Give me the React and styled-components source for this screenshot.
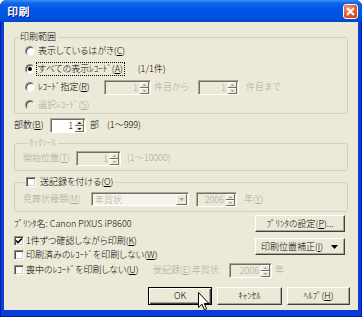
import React from 'react'
import styled, { createGlobalStyle } from 'styled-components'

const FACE = '#ECE9D8'
const GRAY = '#ACA899'

const GlobalStyle = createGlobalStyle`
  html, body { margin: 0; padding: 0; background: #fff; }
  body { font-family: "Noto Sans CJK JP", "Noto Sans", sans-serif; }
`

const Window = styled.div`
  position: relative;
  width: 362px;
  height: 317px;
  box-sizing: border-box;
  display: flex;
  flex-direction: column;
  background: #0A3ED6;
  border-radius: 7px 7px 0 0;
  overflow: hidden;
  box-shadow: inset 1px 0 #0019A8, inset -1px 0 #0019A8, inset 0 -1px #0019A8;
`

const TitleBar = styled.div`
  height: 22px;
  flex: none;
  display: flex;
  align-items: center;
  justify-content: space-between;
  padding: 0 4px 0 7px;
  background: linear-gradient(to bottom, #3D91F6 0, #1266EE 3px, #0058E6 8px, #0054E3 14px, #0050DC 19px, #0045C8 22px);
`

const Title = styled.span`
  color: #fff;
  font-weight: bold;
  font-size: 11px;
  letter-spacing: 0.5px;
  text-shadow: 1px 1px #0A1B8A;
`

const CloseButton = styled.div`
  width: 15px;
  height: 15px;
  box-sizing: border-box;
  border: 1px solid #fff;
  border-radius: 3px;
  background: radial-gradient(circle at 35% 30%, #F39C7C 0, #E0582F 55%, #C5380F 100%);
  display: flex;
  align-items: center;
  justify-content: center;
`

const Body = styled.div`
  flex: 1;
  margin: 0 4px 7px;
  background: ${FACE};
  padding: 9px 10px 0;
  display: flex;
  flex-direction: column;
  font-size: 9px;
  font-weight: 300;
  line-height: 12px;
  color: #000;
  font-feature-settings: "palt";
  white-space: nowrap;
`

const Group = styled.fieldset`
  margin: ${p => p.$mt || 0}px 0 0;
  padding: 0 0 ${p => p.$pb || 0}px ${p => p.$pl || 0}px;
  border: 1px solid #D0D0BF;
  border-radius: 3px;
  min-width: 0;
  display: flex;
  flex-direction: column;
  gap: ${p => p.$gap || 0}px;
`

const Legend = styled.legend`
  margin-left: ${p => p.$ml}px;
  padding: 0 2px 0 ${p => (p.$pad ?? 1)}px;
  height: 12px;
  line-height: 12px;
  display: flex;
  align-items: center;
  gap: 4px;
  color: ${p => (p.$disabled ? GRAY : '#000')};
  background: ${FACE};
`

const Row = styled.div`
  height: ${p => p.$h || 16}px;
  margin-top: ${p => p.$mt || 0}px;
  display: flex;
  align-items: center;
  flex: none;
`

const Text = styled.span`
  display: inline-block;
  color: ${p => (p.$disabled ? GRAY : '#000')};
  width: ${p => (p.$w ? `${p.$w}px` : 'auto')};
  margin-left: ${p => p.$ml || 0}px;
  flex: none;
`

const Key = styled.span`
  text-decoration: underline;
  text-underline-offset: 1px;
`

const Focus = styled.span`
  display: inline-block;
  outline: 1px dotted #000;
  outline-offset: 0;
  padding: 0 1px;
  margin-left: -1px;
  line-height: 12px;
`

const RadioDot = styled.span`
  width: 10px;
  height: 10px;
  box-sizing: border-box;
  border-radius: 50%;
  border: 1px solid;
  border-color: #8E8D86 #F4F3EE #F4F3EE #8E8D86;
  box-shadow: inset 1px 1px #4F4E47;
  background: ${p => (p.$disabled ? FACE : '#fff')};
  display: inline-flex;
  align-items: center;
  justify-content: center;
  margin: 0 3px 0 10px;
  flex: none;
  &::after {
    content: '';
    width: 4px;
    height: 4px;
    border-radius: 50%;
    background: #000;
    display: ${p => (p.$checked ? 'block' : 'none')};
  }
`

const Box = styled.span`
  width: 10px;
  height: 10px;
  box-sizing: border-box;
  border: 1px solid;
  border-color: #8E8D86 #fff #fff #8E8D86;
  box-shadow: inset 1px 1px #4F4E47, inset -1px -1px #D4D0C8;
  background: #fff;
  display: inline-flex;
  align-items: center;
  justify-content: center;
  margin: 0 ${p => p.$mr ?? 2}px 0 ${p => p.$ml || 0}px;
  flex: none;
`

const SpinBox = styled.div`
  box-sizing: border-box;
  width: ${p => p.$w}px;
  height: 15px;
  margin-left: ${p => p.$ml || 0}px;
  display: flex;
  flex: none;
  border: 1px solid;
  border-color: #ACA899 #fff #fff #ACA899;
  box-shadow: inset 1px 1px #716F64;
  background: ${p => (p.$disabled ? FACE : '#fff')};
`

const SpinValue = styled.span`
  flex: 1;
  text-align: right;
  padding: 1px 2px 0 0;
  line-height: 12px;
  color: ${p => (p.$disabled ? GRAY : '#000')};
`

const SpinArrows = styled.svg`
  flex: none;
  margin: 1px 1px 0 0;
`

const Combo = styled.div`
  box-sizing: border-box;
  width: ${p => p.$w}px;
  height: 14px;
  display: flex;
  flex: none;
  border: 1px solid;
  border-color: #ACA899 #fff #fff #ACA899;
  box-shadow: inset 1px 1px #716F64;
  background: #F5F4EA;
  color: ${GRAY};
  padding: 1px 1px 0 3px;
`

const ComboValue = styled.span`
  flex: 1;
  line-height: 11px;
`

const DropButton = styled.span`
  width: 11px;
  height: 11px;
  box-sizing: border-box;
  border: 1px solid;
  border-color: #fff #716F64 #716F64 #fff;
  background: ${FACE};
  display: flex;
  align-items: center;
  justify-content: center;
`

const Lower = styled.div`
  margin-top: 3px;
  display: flex;
  justify-content: space-between;
  flex: none;
`

const LeftCol = styled.div`
  padding-top: 2px;
  display: flex;
  flex-direction: column;
`

const RightCol = styled.div`
  display: flex;
  flex-direction: column;
  gap: 6px;
  margin-right: 3px;
`

const Button = styled.div`
  box-sizing: border-box;
  width: ${p => p.$w}px;
  height: ${p => p.$h}px;
  background: ${FACE};
  border: 1px solid;
  border-color: ${p => (p.$default ? '#000' : '#fff #404040 #404040 #fff')};
  box-shadow: ${p =>
    p.$default
      ? 'inset 1px 1px #fff, inset -1px -1px #404040, inset -2px -2px #ACA899'
      : 'inset -1px -1px #ACA899'};
  display: flex;
  align-items: center;
  justify-content: ${p => (p.$split ? 'space-between' : 'center')};
  padding: ${p => (p.$split ? '0 6px 0 5px' : '0')};
  flex: none;
`

const ButtonRow = styled.div`
  margin: 10px -2px 0 0;
  display: flex;
  justify-content: flex-end;
  gap: 5px;
`

const CursorLayer = styled.svg`
  position: absolute;
  left: 198px;
  top: 292px;
  pointer-events: none;
`

const Arrows = ({ disabled }) => (
  <SpinArrows width="9" height="12" viewBox="0 0 9 12">
    <rect x="0" y="0" width="9" height="12" fill={FACE} />
    <path d="M0 0.5H8.5V5.5M0 6.5H8.5V11.5M0.5 0V5M0.5 6V11" stroke="#fff" fill="none" />
    <path d="M0 5.5H8.5M0 11.5H8.5M8.5 0V12" stroke="#716F64" fill="none" strokeWidth="1" />
    <path d="M2.5 4L4.5 2L6.5 4Z M2.5 8L4.5 10L6.5 8Z" fill={disabled ? GRAY : '#000'} />
  </SpinArrows>
)

const Spinner = ({ w, ml, value, disabled }) => (
  <SpinBox $w={w} $ml={ml} $disabled={disabled}>
    <SpinValue $disabled={disabled}>{value}</SpinValue>
    <Arrows disabled={disabled} />
  </SpinBox>
)

const Radio = ({ checked, disabled }) => <RadioDot $checked={checked} $disabled={disabled} />

const Check = ({ checked, ml, mr }) => (
  <Box $ml={ml} $mr={mr}>
    {checked && (
      <svg width="8" height="8" viewBox="0 0 8 8">
        <path d="M1 3.5L3 5.5L7 1.5" stroke="#000" strokeWidth="1.6" fill="none" />
      </svg>
    )}
  </Box>
)

export default function App() {
  return (
    <>
      <GlobalStyle />
      <Window>
        <TitleBar>
          <Title>印刷</Title>
          <CloseButton>
            <svg width="9" height="9" viewBox="0 0 9 9">
              <path d="M1 1L8 8M8 1L1 8" stroke="#fff" strokeWidth="1.8" />
            </svg>
          </CloseButton>
        </TitleBar>
        <Body>
          <Group $gap={2}>
            <Legend $ml={4}>印刷範囲</Legend>
            <Row>
              <Radio />
              <Text>表示しているはがき(<Key>C</Key>)</Text>
            </Row>
            <Row>
              <Radio checked />
              <Focus>すべての表示ﾚｺｰﾄﾞ(<Key>A</Key>)</Focus>
              <Text $ml={14}>(1/1件)</Text>
            </Row>
            <Row>
              <Radio />
              <Text $w={66}>ﾚｺｰﾄﾞ指定(<Key>R</Key>)</Text>
              <Spinner w={47} value="1" disabled />
              <Text $ml={3} $w={44} $disabled>件目から</Text>
              <Spinner w={41} value="1" disabled />
              <Text $ml={7} $disabled>件目まで</Text>
            </Row>
            <Row>
              <Radio disabled />
              <Text $disabled>選択ﾚｺｰﾄﾞ(<Key>S</Key>)</Text>
            </Row>
          </Group>

          <Row $mt={3}>
            <Text $w={36}>部数(<Key>B</Key>)</Text>
            <Spinner w={36} value="1" />
            <Text $ml={4} $w={17}>部</Text>
            <Text>(1～999)</Text>
          </Row>

          <Group $mt={4} $pb={4} $pl={8}>
            <Legend $ml={5} $disabled>ﾀｯｸｼｰﾙ</Legend>
            <Row $mt={1}>
              <Text $w={53} $disabled>開始位置(<Key>T</Key>)</Text>
              <Spinner w={45} value="1" disabled />
              <Text $ml={6} $disabled>(1～10000)</Text>
            </Row>
          </Group>

          <Group $mt={5} $pb={4} $pl={8}>
            <Legend $ml={2} $pad={0}>
              <Check ml={1} mr={0} />
              <span>送記録を付ける(<Key>O</Key>)</span>
            </Legend>
            <Row $mt={3}>
              <Text $w={68} $disabled>見舞状種類(<Key>M</Key>)</Text>
              <Combo $w={98}>
                <ComboValue>年賀状</ComboValue>
                <DropButton>
                  <svg width="5" height="3" viewBox="0 0 5 3">
                    <path d="M0 0H5L2.5 3Z" fill={GRAY} />
                  </svg>
                </DropButton>
              </Combo>
              <Spinner w={41} ml={7} value="2006" disabled />
              <Text $ml={7} $disabled>年(<Key>Y</Key>)</Text>
            </Row>
          </Group>

          <Lower>
            <LeftCol>
              <Row $h={14}>
                <Text>ﾌﾟﾘﾝﾀ名: Canon PIXUS iP8600</Text>
              </Row>
              <Row $h={14} $mt={3}>
                <Check checked />
                <Text>1件ずつ確認しながら印刷(<Key>K</Key>)</Text>
              </Row>
              <Row $h={14}>
                <Check />
                <Text>印刷済みのﾚｺｰﾄﾞを印刷しない(<Key>W</Key>)</Text>
              </Row>
            </LeftCol>
            <RightCol>
              <Button $w={90} $h={17}>ﾌﾟﾘﾝﾀの設定(<Key>P</Key>)...</Button>
              <Button $w={90} $h={17} $split>
                <span>印刷位置補正(<Key>I</Key>)</span>
                <svg width="7" height="4" viewBox="0 0 7 4">
                  <path d="M0 0H7L3.5 4Z" fill="#000" />
                </svg>
              </Button>
            </RightCol>
          </Lower>

          <Row $h={14} $mt={1}>
            <Check />
            <Text $w={127}>喪中のﾚｺｰﾄﾞを印刷しない(<Key>U</Key>)</Text>
            <Text $w={39} $disabled>受記録(<Key>E</Key>)</Text>
            <Text $w={37} $disabled>年賀状</Text>
            <Spinner w={43} value="2006" disabled />
            <Text $ml={3} $disabled>年</Text>
          </Row>

          <ButtonRow>
            <Button $w={64} $h={18} $default>OK</Button>
            <Button $w={65} $h={18}>ｷｬﾝｾﾙ</Button>
            <Button $w={63} $h={18}>ﾍﾙﾌﾟ(<Key>H</Key>)</Button>
          </ButtonRow>
        </Body>
        <CursorLayer width="12" height="19" viewBox="0 0 12 19">
          <path d="M0.5 0.5L0.5 15.5L4 12.2L6.4 17.8L8.6 16.8L6.3 11.5L10.8 11.5Z" fill="#fff" stroke="#000" strokeWidth="1" strokeLinejoin="round" />
        </CursorLayer>
      </Window>
    </>
  )
}
